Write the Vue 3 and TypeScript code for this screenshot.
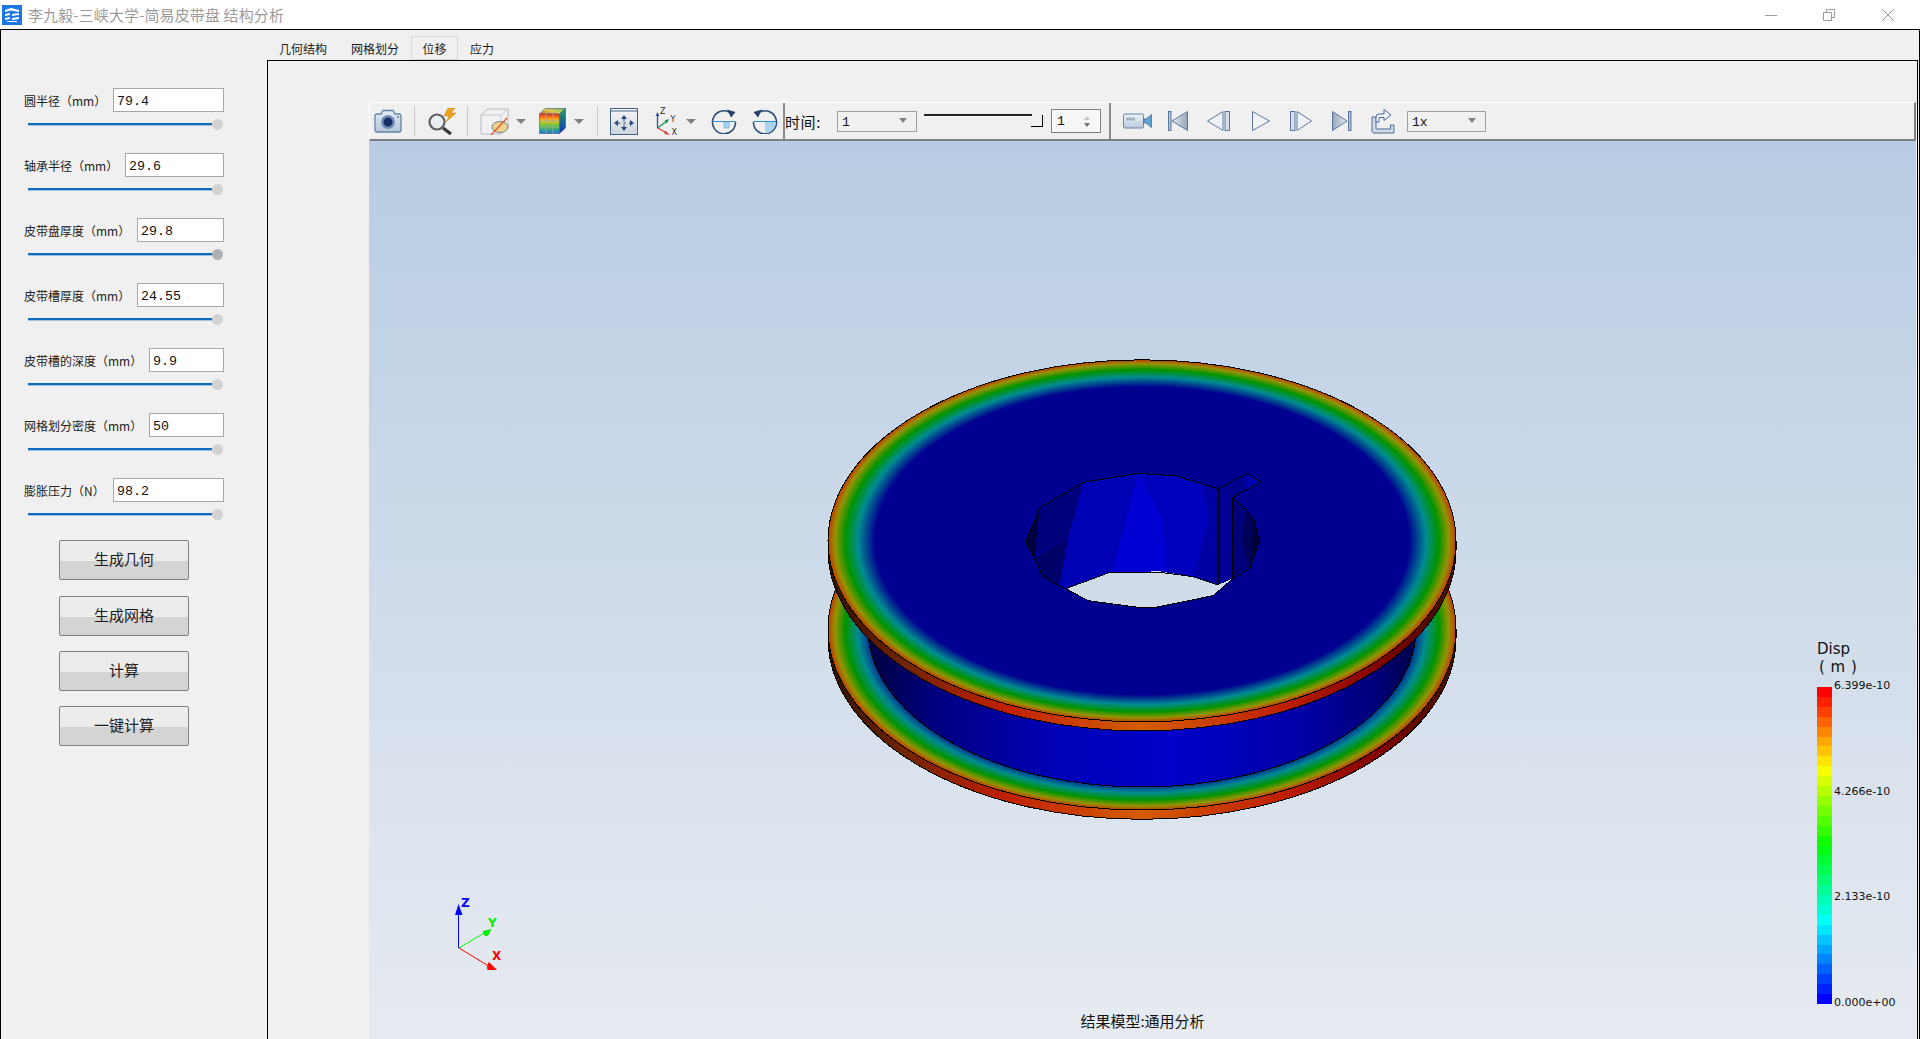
<script setup lang="ts">
interface Param { label: string; value: string; width: number; dark?: boolean }
const params: Param[] = [
  { label: '圆半径（mm）', value: '79.4', width: 111 },
  { label: '轴承半径（mm）', value: '29.6', width: 99 },
  { label: '皮带盘厚度（mm）', value: '29.8', width: 87, dark: true },
  { label: '皮带槽厚度（mm）', value: '24.55', width: 87 },
  { label: '皮带槽的深度（mm）', value: '9.9', width: 75 },
  { label: '网格划分密度（mm）', value: '50', width: 75 },
  { label: '膨胀压力（N）', value: '98.2', width: 111 },
]
const actions = ['生成几何', '生成网格', '计算', '一键计算']
const tabs = ['几何结构', '网格划分', '位移', '应力']
const bands = Array.from({ length: 32 }, (_, i) => `hsl(${Math.round((i / 31) * 240)},100%,50%)`)
const ticks = ['6.399e-10', '4.266e-10', '2.133e-10', '0.000e+00']
const hole = '77,278 120,172 250,97 415,70 530,78 655,117 738,70 782,96 697,142 740,180 762,210 778,272 750,355 697,388 640,437 465,472 430,474 265,452 200,418 130,382 100,320'
const wallFaces: { points: string; fill: string }[] = [
  { points: '77,278 120,172 103,325', fill: '#00003c' },
  { points: '120,172 250,97 205,262 105,310', fill: '#00007c' },
  { points: '103,325 205,262 178,408 130,382', fill: '#000068' },
  { points: '250,97 415,70 335,367 200,413 178,408 205,262', fill: '#0000b4' },
  { points: '415,70 490,210 500,365 335,367', fill: '#0000d2' },
  { points: '415,70 530,78 610,104 625,210 585,380 500,365 490,210', fill: '#0000bc' },
  { points: '610,104 655,117 655,405 585,380 625,210', fill: '#0000a2' },
  { points: '655,117 697,142 697,388 655,405', fill: '#000098' },
  { points: '697,142 740,180 725,270 750,355 697,388', fill: '#00007a' },
  { points: '740,180 762,210 750,355 725,270', fill: '#000058' },
  { points: '762,210 778,272 750,355', fill: '#00003c' },
]
</script>

<template>
  <div class="app">
    <header class="titlebar">
      <svg class="logo" width="20" height="20" viewBox="0 0 20 20">
        <rect width="20" height="20" fill="#1b76e6" />
        <path d="M3 5 L9 3 L17 5 L17 7 L9 5.5 L3 7Z M3 9 L8 8 V10 L3 11Z M10 9 L17 8 V10 L10 11Z M3 13 L8 12 V14 L3 15Z M10 13 L17 12 V14 L10 15Z M5 16 L15 16 V17 H5Z" fill="#fff" />
      </svg>
      <span class="title">李九毅-三峡大学-简易皮带盘 结构分析</span>
      <div class="winctl">
        <svg width="12" height="12" viewBox="0 0 12 12"><path d="M0 6.5H12" stroke="#9a9a9a" fill="none" /></svg>
        <svg width="12" height="12" viewBox="0 0 12 12"><path d="M.5 3.5H8.500V11.500H.5Z M3.500 3V.5H11.500V8.500H9" stroke="#9a9a9a" fill="none" /></svg>
        <svg class="close" width="12" height="12" viewBox="0 0 12 12"><path d="M0 0L12 12M12 0L0 12" stroke="#9a9a9a" fill="none" /></svg>
      </div>
    </header>

    <div class="window">
      <aside class="side">
        <div v-for="p in params" :key="p.label" class="param">
          <div class="param-row">
            <label class="param-label">{{ p.label }}</label>
            <input class="param-input" :value="p.value" :style="{ width: p.width + 'px' }" />
          </div>
          <div class="slider">
            <span class="slider-track"></span>
            <span class="slider-knob" :class="{ dark: p.dark }"></span>
          </div>
        </div>
        <div class="actions">
          <button v-for="a in actions" :key="a" class="action">{{ a }}</button>
        </div>
      </aside>

      <main class="main">
        <nav class="tabs">
          <span v-for="t in tabs" :key="t" class="tab" :class="{ active: t === '位移' }">{{ t }}</span>
        </nav>
        <section class="pane">
          <div class="toolbar">
            <!-- camera -->
            <svg class="i-camera" width="28" height="24" viewBox="0 0 28 24">
              <defs><linearGradient id="gCam" x1="0" y1="0" x2="0" y2="1"><stop offset="0" stop-color="#e4edf6" /><stop offset="1" stop-color="#b4c6da" /></linearGradient></defs>
              <path d="M1 7q0-2 2-2h4l2-3.500h10l2 3.500h4q2 0 2 2v14q0 2-2 2H3q-2 0-2-2Z" fill="url(#gCam)" stroke="#6583a8" stroke-width="1.300" />
              <circle cx="14" cy="13" r="7" fill="#6f8db6" />
              <circle cx="14" cy="13" r="4.500" fill="#1b2f66" />
              <circle cx="24" cy="8" r="1" fill="#5a7597" />
            </svg>
            <span class="sep sep-a"></span>
            <!-- magnifier -->
            <svg class="i-zoom" width="29" height="27" viewBox="0 0 29 27">
              <circle cx="10" cy="14" r="7.500" fill="#e9eef3" stroke="#5d5d5d" stroke-width="2.200" />
              <path d="M16 20L24 26" stroke="#3a3a3a" stroke-width="3.400" fill="none" />
              <path d="M21 0H28L24 5H29L19 14L22 8H17Z" fill="#f0a020" stroke="#d08010" stroke-width=".5" />
            </svg>
            <span class="sep sep-b"></span>
            <!-- box + clip -->
            <svg class="i-box" width="29" height="27" viewBox="0 0 29 27">
              <path d="M1 7L8 1H28V20L21 26H1Z" fill="#f2f2f4" stroke="#b8bcc4" />
              <path d="M1 7H21V26M21 7L28 1" fill="none" stroke="#c4c8ce" />
              <ellipse cx="20" cy="19" rx="8" ry="5.500" fill="#ead48c" stroke="#7f7f7f" />
              <path d="M11 27L27 10" stroke="#d9582a" stroke-width="1.300" fill="none" />
            </svg>
            <span class="drop drop-a"></span>
            <!-- colour cube -->
            <svg class="i-cube" width="27" height="26" viewBox="0 0 27 26">
              <defs>
                <linearGradient id="gCube" x1="0" y1="0" x2="0" y2="1"><stop offset="0" stop-color="#f02a10" /><stop offset=".33" stop-color="#f8c020" /><stop offset=".62" stop-color="#50c840" /><stop offset="1" stop-color="#1878e0" /></linearGradient>
                <linearGradient id="gCubeT" x1="0" y1="1" x2="1" y2="0"><stop offset="0" stop-color="#e05030" /><stop offset=".5" stop-color="#e0d040" /><stop offset="1" stop-color="#50c070" /></linearGradient>
                <linearGradient id="gCubeS" x1="0" y1="0" x2="0" y2="1"><stop offset="0" stop-color="#20a060" /><stop offset="1" stop-color="#1030c0" /></linearGradient>
              </defs>
              <path d="M.5 6L6 .5H26.500L20.500 6Z" fill="url(#gCubeT)" stroke="#50647c" stroke-width=".7" />
              <path d="M.5 6H20.500V25.500H.5Z" fill="url(#gCube)" stroke="#50647c" stroke-width=".7" />
              <path d="M20.500 6L26.500 .5V20L20.500 25.500Z" fill="url(#gCubeS)" stroke="#50647c" stroke-width=".7" />
              <path d="M7 6V25.500M14 6V25.500M.5 12.500H20.500M.5 19H20.500M7 6L13 .5M14 6L20 .5" stroke="#a8a890" stroke-width=".8" fill="none" />
            </svg>
            <span class="drop drop-b"></span>
            <span class="sep sep-c"></span>
            <!-- fit -->
            <svg class="i-fit" width="28" height="27" viewBox="0 0 28 27">
              <defs><linearGradient id="gFit" x1="0" y1="0" x2="0" y2="1"><stop offset="0" stop-color="#f6f7fa" /><stop offset="1" stop-color="#ccd2dc" /></linearGradient></defs>
              <rect x=".5" y=".5" width="27" height="26" fill="url(#gFit)" stroke="#42608c" />
              <path d="M1 3H27" stroke="#42608c" fill="none" />
              <path d="M14 7L11 11H17Z M14 23L11 19H17Z M4 15L8 12V18Z M24 15L20 12V18Z" fill="#2a4a78" />
              <path d="M14 11V19M8 15H20" stroke="#2a4a78" stroke-width="1" stroke-dasharray="2.500 3" fill="none" />
            </svg>
            <!-- triad -->
            <svg class="i-triad" width="23" height="28" viewBox="0 0 23 28">
              <path d="M2.500 21V8" stroke="#2a5aa0" stroke-width="1.300" fill="none" />
              <path d="M2.500 5L.5 9H4.500Z" fill="#2a5aa0" />
              <path d="M2.500 21L12 14" stroke="#1a9050" stroke-width="1.300" fill="none" />
              <path d="M14 12L9.500 13.500L12 16.500Z" fill="#1a9050" />
              <path d="M2.500 21L12 26" stroke="#e03838" stroke-width="1.300" fill="none" />
              <path d="M15 28L10 23.500L9.500 27Z" fill="#e03838" />
              <text x="5" y="7" class="triad-txt">Z</text>
              <text x="15.500" y="14.500" class="triad-txt">Y</text>
              <text x="16.500" y="27.500" class="triad-txt">X</text>
            </svg>
            <span class="drop drop-c"></span>
            <!-- rotate cw -->
            <svg class="i-rot-a" width="26" height="25" viewBox="0 0 26 25">
              <path d="M18 3A11.500 11.500 0 1 0 24.500 13" fill="none" stroke="#2c4f78" stroke-width="1.600" />
              <path d="M24.500 3L16 .5L20 8.500Z" fill="#24426a" />
              <path d="M1.500 12.500H24.500" stroke="#2c8fd0" stroke-width="1" fill="none" />
              <rect x="13" y="13" width="5" height="6" fill="#a8d4f0" stroke="#6aa8d0" stroke-width=".6" />
            </svg>
            <!-- rotate ccw -->
            <svg class="i-rot-b" width="26" height="25" viewBox="0 0 26 25">
              <path d="M8 3A11.500 11.500 0 1 1 1.500 13" fill="none" stroke="#2c4f78" stroke-width="1.600" />
              <path d="M1.500 3L10 .5L6 8.500Z" fill="#24426a" />
              <path d="M1.500 12.500H24.500" stroke="#2c8fd0" stroke-width="1" fill="none" />
              <path d="M13 13H24Q24 20 17 23.500L13 24Z" fill="#a8d4f0" />
            </svg>
            <span class="divider divider-a"></span>
            <span class="time-label">时间:</span>
            <div class="combo combo-time"><span>1</span><i class="drop drop-in"></i></div>
            <div class="time-slider"><span class="time-line"></span><span class="time-handle"></span></div>
            <div class="spin"><span>1</span><i class="spin-arrows"><b class="up"></b><b class="down"></b></i></div>
            <span class="divider divider-b"></span>
            <!-- video -->
            <svg class="i-video" width="29" height="16" viewBox="0 0 29 16">
              <defs><linearGradient id="gVid" x1="0" y1="0" x2="0" y2="1"><stop offset="0" stop-color="#eef2f7" /><stop offset="1" stop-color="#bccadc" /></linearGradient></defs>
              <rect x=".5" y="1" width="20" height="14" rx="1.500" fill="url(#gVid)" stroke="#6583a8" />
              <rect x="3" y="4.500" width="9" height="3" fill="#a9b4c2" />
              <path d="M21 6H23L28.500 1.500V14.500L23 10H21Z" fill="#5fa7cf" stroke="#4a6a96" stroke-width=".8" />
            </svg>
            <!-- transport -->
            <svg class="i-first" width="20" height="20" viewBox="0 0 20 20">
              <defs><linearGradient id="gFirst" x1="0" y1="0" x2="1" y2="0"><stop offset="0" stop-color="#e8ecf2" /><stop offset="1" stop-color="#96a6b8" /></linearGradient></defs>
              <rect x=".5" y=".5" width="2.500" height="19" fill="#b8c4d4" stroke="#4d6c98" stroke-width=".9" />
              <path d="M19.500 .5V19.500L4 10Z" fill="url(#gFirst)" stroke="#4d6c98" stroke-width=".9" />
            </svg>
            <svg class="i-prev" width="24" height="20" viewBox="0 0 24 20">
              <path d="M16 .5V19.500L.5 10Z" fill="#eef1f5" stroke="#4d6c98" stroke-width=".9" />
              <rect x="18" y=".5" width="4.500" height="19" fill="#d4dce6" stroke="#4d6c98" stroke-width=".9" />
            </svg>
            <svg class="i-play" width="18" height="20" viewBox="0 0 18 20">
              <path d="M.5 .5V19.500L17.500 10Z" fill="#f0f3f6" stroke="#4d6c98" stroke-width=".9" />
            </svg>
            <svg class="i-next" width="22" height="20" viewBox="0 0 22 20">
              <rect x=".5" y=".5" width="4.500" height="19" fill="#d4dce6" stroke="#4d6c98" stroke-width=".9" />
              <path d="M7 .5V19.500L21.500 10Z" fill="#eef1f5" stroke="#4d6c98" stroke-width=".9" />
            </svg>
            <svg class="i-last" width="20" height="20" viewBox="0 0 20 20">
              <defs><linearGradient id="gLast" x1="0" y1="0" x2="1" y2="0"><stop offset="0" stop-color="#96a6b8" /><stop offset="1" stop-color="#e8ecf2" /></linearGradient></defs>
              <path d="M.5 .5V19.500L15 10Z" fill="url(#gLast)" stroke="#4d6c98" stroke-width=".9" />
              <rect x="16.500" y=".5" width="2.500" height="19" fill="#b8c4d4" stroke="#4d6c98" stroke-width=".9" />
            </svg>
            <svg class="i-export" width="24" height="26" viewBox="0 0 24 26">
              <path d="M1 9H5V21H19.500V17H23V25H3Q1 25 1 23Z" fill="#d2dcea" stroke="#4d6c98" />
              <path d="M5 14V9Q5 6 8 6H13V1.500L20 7L13 12.500V9.500H8V14Z" fill="#eef2f7" stroke="#4d6c98" />
            </svg>
            <div class="combo combo-speed"><span>1x</span><i class="drop drop-in"></i></div>
          </div>

          <div class="viewport">
            <svg class="scene" viewBox="369 141 1547 898" width="1547" height="898">
              <defs>
                <radialGradient id="face" cx=".5" cy=".5" r=".5">
                  <stop offset="0" stop-color="#000090" />
                  <stop offset=".85" stop-color="#000090" />
                  <stop offset=".905" stop-color="#008c90" />
                  <stop offset=".945" stop-color="#009400" />
                  <stop offset=".978" stop-color="#949400" />
                  <stop offset=".996" stop-color="#b84c00" />
                  <stop offset="1" stop-color="#a83000" />
                </radialGradient>
                <linearGradient id="rim" x1="0" y1="0" x2="1" y2="0">
                  <stop offset="0" stop-color="#301000" />
                  <stop offset=".12" stop-color="#702400" />
                  <stop offset=".28" stop-color="#c02000" />
                  <stop offset=".5" stop-color="#d45c00" />
                  <stop offset=".72" stop-color="#c02000" />
                  <stop offset=".88" stop-color="#800000" />
                  <stop offset="1" stop-color="#401000" />
                </linearGradient>
                <linearGradient id="hub" x1="0" y1="0" x2="1" y2="0">
                  <stop offset="0" stop-color="#000040" />
                  <stop offset=".12" stop-color="#000080" />
                  <stop offset=".35" stop-color="#0000b8" />
                  <stop offset=".55" stop-color="#0000c8" />
                  <stop offset=".78" stop-color="#0000a8" />
                  <stop offset=".93" stop-color="#000078" />
                  <stop offset="1" stop-color="#000048" />
                </linearGradient>
              </defs>

              <g class="crisp">
                <path d="M828 629A314 181 0 0 0 1456 629V638.300A314 181 0 0 1 828 638.300Z" fill="url(#rim)" stroke="#000" />
                <ellipse cx="1142" cy="629" rx="314" ry="181" fill="url(#face)" stroke="#000" />
                <path d="M868 540V629A274 158 0 0 0 1416 629V540Z" fill="url(#hub)" stroke="#000" />
                <path d="M828 540.800A314 181 0 0 0 1456 540.800V549.800A314 181 0 0 1 828 549.800Z" fill="url(#rim)" stroke="#000" />
                <ellipse cx="1142" cy="540.800" rx="314" ry="181" fill="url(#face)" stroke="#000" />
              </g>

              <g transform="translate(1000 450) scale(.33333)" stroke-width="3" class="crisp">
                <polygon :points="hole" fill="#000090" stroke="#000" />
                <polygon v-for="f in wallFaces" :key="f.points" :points="f.points" :fill="f.fill" />
                <polygon points="200,415 330,367 480,364 580,380 655,405 697,385 640,435 465,472 430,474 265,452" fill="#d1dce8" />
                <polygon points="738,70 782,96 738,118" fill="#0000b0" />
                <polyline :points="hole + ' 77,278'" fill="none" stroke="#000" />
                <path d="M655 117V405M697 142V388M738 70V118M655 117L738 70M738 118L697 142M200 415L330 367H480L580 380L655 405" fill="none" stroke="#000" />
              </g>

              <!-- triad -->
              <g>
                <path d="M458.500 948V912" stroke="#0000ff" stroke-width="1" />
                <path d="M458.500 904L455 915H462.500Z" fill="#0000ff" />
                <path d="M459 948L484 933" stroke="#00ff00" stroke-width="1" />
                <path d="M491 929L483 931Q483 935 486 936.500Q490 935 491 929Z" fill="#00ee00" />
                <path d="M459 948L487 965" stroke="#ff0000" stroke-width="1" />
                <path d="M497 970L489 962Q486 966 487.500 970Z" fill="#ff0000" />
                <text x="461" y="907" class="axis axis-z">Z</text>
                <text x="488" y="927" class="axis axis-y">Y</text>
                <text x="492" y="960" class="axis axis-x">X</text>
              </g>
            </svg>

            <div class="legend">
              <div class="legend-title">Disp<br /><span class="legend-unit">( m )</span></div>
              <div class="legend-body">
                <div class="legend-bar">
                  <span v-for="c in bands" :key="c" class="legend-band" :style="{ background: c }"></span>
                </div>
                <div class="legend-ticks">
                  <span v-for="t in ticks" :key="t">{{ t }}</span>
                </div>
              </div>
            </div>
            <div class="caption">结果模型:通用分析</div>
          </div>
        </section>
      </main>
    </div>
  </div>
</template>

<style scoped>
.app {
  width: 1920px;
  height: 1039px;
  display: flex;
  flex-direction: column;
  overflow: hidden;
  background: #fff;
  font-family: "Noto Sans CJK SC", "Liberation Sans", sans-serif;
  color: #1c1c1c;
}
.titlebar {
  height: 29px;
  display: flex;
  align-items: center;
  padding-left: 2px;
  background: #fff;
  flex: none;
}
.logo { display: block; }
.title {
  margin-left: 6px;
  font-size: 15px;
  letter-spacing: .12px;
  color: #9b9b9b;
  white-space: nowrap;
}
.winctl {
  margin-left: auto;
  display: flex;
  gap: 46px;
  padding-right: 26px;
}
.winctl svg { display: block; }
.winctl .close { margin-left: 1px; }

.window {
  flex: 1;
  min-height: 0;
  display: flex;
  background: #f0f0f0;
  border: 1px solid #000;
  border-bottom: 0;
}
.side {
  width: 266px;
  flex: none;
  box-sizing: border-box;
  padding: 58px 43px 0 23px;
}
.param + .param { margin-top: 23px; }
.param-row {
  display: flex;
  align-items: center;
  height: 24px;
}
.param-label {
  flex: 1;
  font-size: 12px;
  white-space: nowrap;
  color: #222;
}
.param-input {
  box-sizing: border-box;
  height: 24px;
  flex: none;
  border: 1px solid #a8a8a8;
  background: #fff;
  padding: 2px 0 0 3px;
  font-family: "Liberation Mono", monospace;
  font-size: 13.3px;
  color: #111;
  outline: none;
  border-radius: 0;
}
.slider {
  margin: 7px 0 0 4px;
  height: 11px;
  width: 195px;
  display: flex;
  align-items: center;
}
.slider-track {
  flex: 1;
  height: 2px;
  margin-bottom: 1px;
  background: #0f6cbd;
  box-shadow: 0 1px 0 rgba(15, 108, 189, .35);
}
.slider-knob {
  width: 11px;
  height: 11px;
  border-radius: 50%;
  background: #d2d2d2;
}
.slider-knob.dark { background: #aeb2b6; }

.actions {
  margin: 20px 0 0 35px;
  display: flex;
  flex-direction: column;
  gap: 15px;
}
.action {
  width: 130px;
  height: 40px;
  box-sizing: border-box;
  border: 1px solid #808080;
  border-radius: 2px;
  background: linear-gradient(#ececec 0, #ececec 20px, #d4d4d4 20px, #d4d4d4 100%);
  font-family: inherit;
  font-size: 15px;
  color: #1c1c1c;
  padding: 0 0 3px;
}
.action:first-child { margin-bottom: 1px; }

.main {
  flex: 1;
  min-width: 0;
  display: flex;
  flex-direction: column;
  margin-right: 1px;
}
.tabs {
  height: 30px;
  flex: none;
  display: flex;
  align-items: flex-end;
  position: relative;
  z-index: 1;
}
.tab {
  height: 24px;
  box-sizing: border-box;
  padding: 0 11px;
  font-size: 12px;
  line-height: 26px;
  width: 72px;
  text-align: center;
  white-space: nowrap;
}
.tab.active {
  width: 47px;
  padding: 0;
  margin-left: 0;
  background: #f0f0f0;
  border: 1px solid #d9d9d9;
  line-height: 24px;
}
.tab:last-child {
  width: 48px;
  padding: 0;
}
.pane {
  flex: 1;
  min-height: 0;
  box-sizing: border-box;
  border: 1px solid #000;
  border-bottom: 0;
  padding: 41px 1px 0 101px;
  display: flex;
  flex-direction: column;
}
.toolbar {
  height: 39px;
  flex: none;
  box-sizing: border-box;
  display: flex;
  align-items: center;
  padding-left: 5px;
  background: #f0f0f0;
  border-top: 1px solid #fff;
  border-left: 1px solid #fff;
  border-bottom: 2px solid #808080;
  border-right: 2px solid #808080;
}
.toolbar svg { flex: none; display: block; }
.i-camera { margin-left: -1px; }
.sep { width: 1px; height: 30px; background: #c8c8c8; flex: none; }
.sep-a { margin-left: 12px; }
.i-zoom { margin-left: 12px; }
.sep-b { margin-left: 11px; }
.i-box { margin-left: 12px; }
.drop {
  flex: none;
  width: 0;
  height: 0;
  border-left: 5px solid transparent;
  border-right: 5px solid transparent;
  border-top: 5px solid #808080;
}
.drop-a { margin-left: 7px; }
.i-cube { margin-left: 13px; }
.drop-b { margin-left: 8px; }
.sep-c { margin-left: 13px; }
.i-fit { margin-left: 12px; }
.i-triad { margin-left: 17px; }
.drop-c { margin-left: 8px; }
.i-rot-a { margin-left: 15px; }
.i-rot-b { margin-left: 15px; }
.divider {
  width: 2px;
  height: 36px;
  background: #8c8c8c;
  flex: none;
}
.divider-a { margin-left: 5px; }
.time-label {
  width: 52px;
  flex: none;
  font-size: 15px;
  letter-spacing: .6px;
  color: #111;
  white-space: nowrap;
}
.combo {
  height: 21px;
  box-sizing: border-box;
  flex: none;
  border: 1px solid #a0a0a0;
  display: flex;
  align-items: center;
  padding: 2px 9px 0 4px;
  font-family: "Liberation Mono", monospace;
  font-size: 13px;
  color: #111;
}
.combo .drop-in { margin: -3px 0 0 auto; border-left-width: 4px; border-right-width: 4px; }
.combo-time { width: 80px; }
.time-slider {
  margin-left: 7px;
  width: 119px;
  height: 18px;
  flex: none;
  position: relative;
}
.time-line {
  position: absolute;
  left: 0;
  right: 11px;
  top: 2px;
  height: 3px;
  box-sizing: border-box;
  border-top: 2px solid #222;
  border-bottom: 1px solid #fff;
}
.time-handle {
  position: absolute;
  right: 0;
  top: 3px;
  width: 12px;
  height: 12px;
  box-sizing: border-box;
  border-right: 1px solid #000;
  border-bottom: 1px solid #000;
}
.spin {
  margin-left: 8px;
  width: 50px;
  height: 24px;
  flex: none;
  box-sizing: border-box;
  border: 1px solid #808080;
  display: flex;
  align-items: center;
  padding: 1px 10px 0 5px;
  font-family: "Liberation Mono", monospace;
  font-size: 13px;
  background: #f6f6f6;
  color: #111;
}
.spin-arrows {
  margin-left: auto;
  display: flex;
  flex-direction: column;
  gap: 3px;
}
.spin-arrows b {
  display: block;
  width: 0;
  height: 0;
  border-left: 3px solid transparent;
  border-right: 3px solid transparent;
}
.spin-arrows .up { border-bottom: 4px solid #c4c4c4; }
.spin-arrows .down { border-top: 4px solid #707070; }
.divider-b { margin-left: 8px; }
.i-video { margin-left: 12px; }
.i-first { margin-left: 16px; }
.i-prev { margin-left: 19px; }
.i-play { margin-left: 21px; }
.i-next { margin-left: 20px; }
.i-last { margin-left: 20px; }
.i-export { margin-left: 19px; }
.combo-speed { margin-left: 12px; width: 79px; }
.triad-txt {
  font-family: "DejaVu Sans", sans-serif;
  font-size: 8px;
  fill: #2a2a2a;
}

.viewport {
  flex: 1;
  min-height: 0;
  position: relative;
  overflow: hidden;
  background: linear-gradient(#b8cce3, #e7ebf1);
}
.scene {
  position: absolute;
  left: 0;
  top: 0;
  display: block;
}
.crisp { shape-rendering: crispEdges; }
.axis {
  font-family: "DejaVu Sans", sans-serif;
  font-size: 12px;
  font-weight: 700;
}
.axis-z { fill: #0000ff; }
.axis-y { fill: #00ee00; }
.axis-x { fill: #ff0000; }

.legend {
  position: absolute;
  left: 1448px;
  top: 499px;
  font-family: "DejaVu Sans", sans-serif;
  color: #111;
}
.legend-title {
  font-size: 15px;
  line-height: 18px;
  margin-bottom: 11px;
}
.legend-unit { margin-left: 2px; word-spacing: 1px; }
.legend-body {
  display: flex;
  height: 317px;
}
.legend-bar {
  width: 15px;
  height: 317px;
  display: flex;
  flex-direction: column;
}
.legend-band { flex: 1; }
.legend-ticks {
  margin: -8px 0 0 2px;
  height: 330px;
  display: flex;
  flex-direction: column;
  justify-content: space-between;
  font-size: 11px;
  line-height: 13px;
}
.caption {
  position: absolute;
  left: 0;
  right: 0;
  bottom: 8px;
  text-align: center;
  font-size: 15px;
  line-height: 20px;
  color: #111;
}
</style>

<style>
html, body { margin: 0; overflow: hidden; }
</style>
